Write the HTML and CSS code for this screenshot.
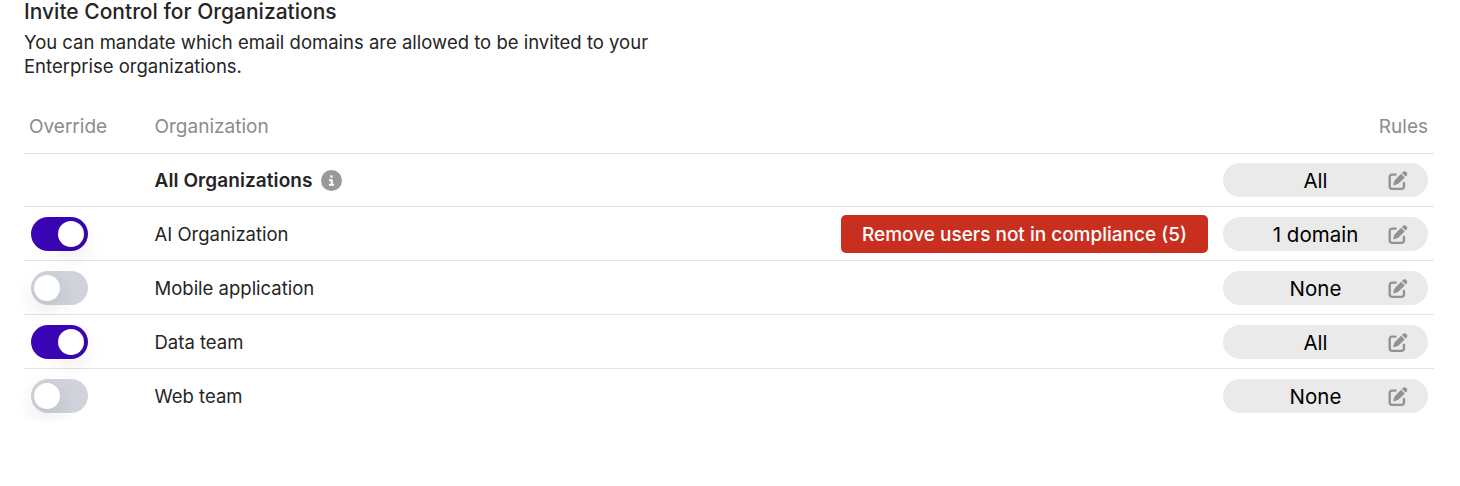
FILE: index.html
```html
<!DOCTYPE html>
<html lang="en">
<head>
<meta charset="utf-8">
<title>Invite Control for Organizations</title>
<link rel="stylesheet" href="styles.css">
</head>
<body>
<svg class="sprite" aria-hidden="true">
  <symbol id="edit" viewBox="0 0 512 512"><path d="M471.6 21.7c-21.9-21.9-57.3-21.9-79.2 0L362.3 51.7l97.9 97.9 30.1-30.1c21.9-21.9 21.9-57.3 0-79.2L471.6 21.7zm-299.2 220c-6.1 6.1-10.8 13.6-13.5 21.9l-29.6 88.8c-2.9 8.6-.6 18.1 5.8 24.6s15.9 8.7 24.6 5.8l88.8-29.6c8.2-2.7 15.7-7.4 21.9-13.5L437.7 172.3 339.7 74.3 172.4 241.7zM96 64C43 64 0 107 0 160V416c0 53 43 96 96 96H352c53 0 96-43 96-96V320c0-17.7-14.3-32-32-32s-32 14.3-32 32v96c0 17.7-14.3 32-32 32H96c-17.7 0-32-14.3-32-32V160c0-17.7 14.3-32 32-32h96c17.7 0 32-14.3 32-32s-14.3-32-32-32H96z"/></symbol>
</svg>
<main class="panel">
  <h2 class="title">Invite Control for Organizations</h2>
  <p class="desc">You can mandate which email domains are allowed to be invited to your<br>Enterprise organizations.</p>
  <div class="table">
    <div class="row head">
      <span class="override">Override</span>
      <span class="org">Organization</span>
      <span>Rules</span>
    </div>
    <div class="row">
      <span class="override"></span>
      <span class="org"><b class="all">All Organizations</b>
        <svg class="info" viewBox="0 0 512 512"><path fill-rule="evenodd" d="M256 512A256 256 0 1 0 256 0a256 256 0 1 0 0 512zM216 336h24V272H216c-13.300 0-24-10.700-24-24s10.700-24 24-24h48c13.300 0 24 10.700 24 24v88h8c13.300 0 24 10.700 24 24s-10.700 24-24 24H216c-13.300 0-24-10.700-24-24s10.700-24 24-24zm40-208a32 32 0 1 1 0 64 32 32 0 1 1 0-64z"/></svg></span>
      <button class="rule"><span class="value">All</span><svg class="edit"><use href="#edit"/></svg></button>
    </div>
    <div class="row">
      <span class="override"><span class="toggle on"><i class="knob"></i></span></span>
      <span class="org">AI Organization</span>
      <button class="remove">Remove users not in compliance (5)</button>
      <button class="rule"><span class="value">1 domain</span><svg class="edit"><use href="#edit"/></svg></button>
    </div>
    <div class="row">
      <span class="override"><span class="toggle"><i class="knob"></i></span></span>
      <span class="org">Mobile application</span>
      <button class="rule"><span class="value">None</span><svg class="edit"><use href="#edit"/></svg></button>
    </div>
    <div class="row">
      <span class="override"><span class="toggle on"><i class="knob"></i></span></span>
      <span class="org">Data team</span>
      <button class="rule"><span class="value">All</span><svg class="edit"><use href="#edit"/></svg></button>
    </div>
    <div class="row">
      <span class="override"><span class="toggle"><i class="knob"></i></span></span>
      <span class="org">Web team</span>
      <button class="rule"><span class="value">None</span><svg class="edit"><use href="#edit"/></svg></button>
    </div>
  </div>
</main>
</body>
</html>
```
FILE: styles.css
```css
* { box-sizing: border-box; }
body { margin: 0; background: #fff; color: #252525; font-family: Inter, "Liberation Sans", sans-serif; font-size: 18.500px; }
.sprite { display: none; }
.panel { height: 421px; padding: 0 26px 0 24px; overflow: hidden; }
.title { margin: 0; height: 31px; line-height: 23px; font-size: 21px; font-weight: 500; white-space: nowrap; }
.desc { margin: 0; line-height: 23.500px; white-space: nowrap; }
.table { padding-top: 23px; }
.row { display: flex; align-items: center; height: 53.900px; padding: 1px 6px 0 0; border-bottom: 1px solid #e4e4e6; }
.row:last-child { border-bottom: 0; padding-top: 0; }
.head { height: 52.500px; padding-top: 0; color: #8c8c8c; font-size: 19px; }
.override { display: flex; flex: none; width: 130.500px; padding-left: 6px; }
.head .override { padding-left: 5px; }
.org { display: flex; flex: 1; align-items: center; gap: 8px; white-space: nowrap; }
.all { font-size: 19px; font-weight: 600; letter-spacing: .08px; }
.info { width: 21px; height: 21px; fill: #999; }
.toggle { display: flex; align-items: center; width: 57px; height: 34px; margin-left: 1px; padding: 0 3px; border-radius: 17px; background: #d0d3da; }
.toggle.on { justify-content: flex-end; padding-right: 4px; background: #3a06b5; }
.knob { width: 26px; height: 26px; border-radius: 50%; background: #fff; box-shadow: 0 8px 22px rgba(0, 0, 0, .12); }
button { border: 0; padding: 0; font: inherit; white-space: nowrap; }
.remove { width: 367px; height: 38px; margin-right: 15px; border-radius: 5px; background: #c92f1e; color: #fff; font-size: 19px; font-weight: 500; }
.rule { display: flex; flex: none; align-items: center; width: 205px; height: 34px; padding: 0 20px; border-radius: 17px; background: #eaeaea; color: #000; font-size: 20.500px; }
.value { flex: 1; text-align: center; }
.edit { width: 20px; height: 19px; margin-top: 1px; fill: #929292; }
```
